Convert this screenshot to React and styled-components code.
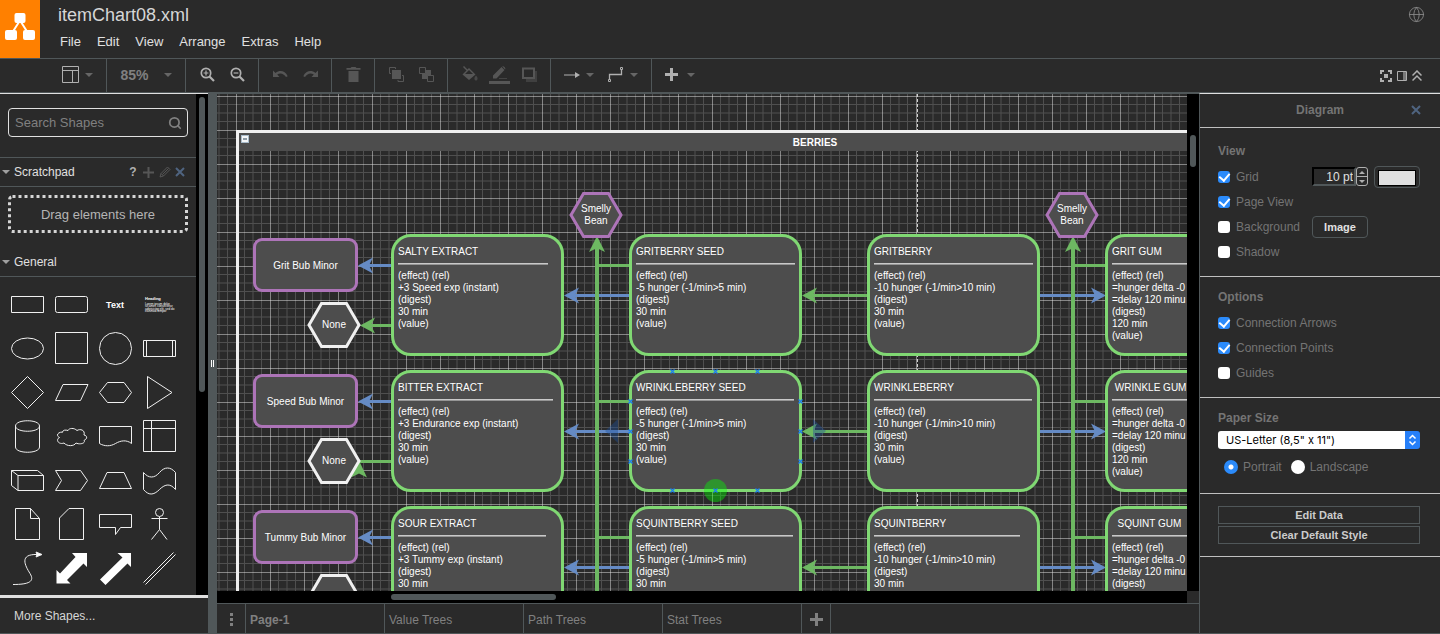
import React, { useState } from "react";
import styled, { createGlobalStyle, css } from "styled-components";
import { Globe, Search } from "lucide-react";

const bg = "#2a2a2a";
const slate = "#505759";
const light = "#e0e0e0";
const muted = "#747474";
const cardFill = "#4d4d4d";
const greenEdge = "#6db862";
const blueEdge = "#658bc5";
const green = "#80d873";
const purple = "#ad74b8";

const GlobalStyle = createGlobalStyle`
    * { box-sizing: border-box; }
    body {
        margin: 0;
        background: ${bg};
        color: #cccccc;
        font-family: "Liberation Sans", Arial, Helvetica, sans-serif;
        font-size: 12px;
    }
    button, input, select { font-family: inherit; margin: 0; }
    svg { display: block; flex: none; }
`;

const Shell = styled.div`
    display: flex;
    flex-direction: column;
    height: 100vh;
    border-bottom: 1px solid ${slate};
`;

/* header */
const Header = styled.header`
    display: flex;
    height: 58px;
    flex: none;
`;
const Logo = styled.a`
    display: flex;
    align-items: center;
    justify-content: center;
    width: 40px;
    padding-bottom: 4px;
    background: #ff8000;
`;
const Titles = styled.div`
    flex: 1;
    padding: 4px 0 0 18px;
`;
const FileName = styled.h1`
    margin: 0;
    color: #d6d6d6;
    font-size: 18px;
    font-weight: normal;
    line-height: 22px;
`;
const MenuBar = styled.nav`
    display: flex;
    gap: 16px;
    padding: 7px 0 0 2px;
`;
const MenuItem = styled.button`
    padding: 0;
    border: 0;
    background: none;
    color: #e0e0e0;
    font-size: 13px;
    line-height: 18px;
`;
const LanguageButton = styled.button`
    align-self: flex-start;
    margin: 6px 15px 0 0;
    padding: 0;
    border: 0;
    background: none;
    color: #8a8a8a;
`;

/* toolbar */
const Toolbar = styled.div`
    display: flex;
    flex: none;
    height: 35px;
    border-top: 1px solid ${slate};
    border-bottom: 1px solid ${slate};
`;
const Group = styled.div`
    display: flex;
    align-items: center;
    justify-content: ${p => p.$align || "center"};
    width: ${p => p.$width}px;
    padding: 0 6px 2px;
    border-right: ${p => (p.$last ? "0" : `1px solid ${slate}`)};
`;
const Tool = styled.button`
    display: flex;
    align-items: center;
    justify-content: ${p => (p.$menu ? "space-between" : "center")};
    min-width: ${p => (p.$menu ? 44 : 30)}px;
    height: 30px;
    gap: 6px;
    padding: ${p => (p.$menu ? "0 7px" : "0")};
    border: 0;
    background: none;
    color: ${p => (p.$off ? "#565656" : "#b0b0b0")};
`;
const Zoom = styled(Tool)`
    width: 65px;
    color: #808080;
    font-size: 14px;
    font-weight: bold;
`;
const Caret = styled.i`
    border: 4px solid transparent;
    border-top-color: ${p => p.$color || "#666666"};
    border-bottom: 0;
`;
const WindowTools = styled.div`
    display: flex;
    align-items: center;
    gap: 5px;
    margin-left: auto;
    padding-right: 18px;
`;
const SmallTool = styled.button`
    padding: 0;
    border: 0;
    background: none;
    color: #b0b0b0;
`;

/* body */
const Body = styled.div`
    display: flex;
    flex: 1;
    min-height: 0;
`;
const Sidebar = styled.aside`
    display: flex;
    flex-direction: column;
    width: 208px;
    flex: none;
    border-top: 1px solid ${light};
`;
const SidebarScroll = styled.div`
    display: flex;
    flex: 1;
    min-height: 0;
    overflow: hidden;
`;
const Palette = styled.div`
    width: 196px;
`;
const SearchBox = styled.label`
    display: flex;
    align-items: center;
    height: 29px;
    margin: 14px 8px 20px;
    padding: 0 5px 0 6px;
    border: 1px solid ${light};
    border-radius: 4px;
    color: #808080;
`;
const SearchInput = styled.input`
    flex: 1;
    min-width: 0;
    padding: 0;
    border: 0;
    outline: 0;
    background: none;
    color: #cccccc;
    font-size: 13px;
    &::placeholder { color: #808080; }
`;
const SectionTitle = styled.div`
    display: flex;
    align-items: center;
    height: 30px;
    padding: 0 9px 0 2px;
    gap: 4px;
    border-top: ${p => (p.$line ? `1px solid ${slate}` : "0")};
    border-bottom: 1px solid ${slate};
`;
const SectionName = styled.h2`
    flex: 1;
    margin: 0;
    color: #e0e0e0;
    font-size: 12px;
    font-weight: normal;
`;
const SectionTool = styled.button`
    width: 12px;
    padding: 0;
    border: 0;
    background: none;
    color: ${p => p.$color || "#565656"};
    font-size: 12px;
    font-weight: bold;
`;
const DropZone = styled.div`
    display: grid;
    place-items: center;
    height: 38px;
    margin: 8px 8px 14px;
    color: #b5b5b5;
    font-size: 13px;
    & > * { grid-area: 1 / 1; }
`;
const ShapeGrid = styled.div`
    display: grid;
    grid-template-columns: repeat(4, 44px);
    grid-auto-rows: 44px;
    padding: 5px;
`;
const ShapeButton = styled.button`
    padding: 0;
    border: 0;
    background: none;
`;
const Track = styled.div`
    width: ${p => (p.$horizontal ? "auto" : "12px")};
    height: ${p => (p.$horizontal ? "12px" : "auto")};
    padding: ${p => p.$pad};
    background: #000000;
`;
const Thumb = styled.div`
    width: ${p => p.$width}px;
    height: ${p => p.$height}px;
    border-radius: 3px;
    background: ${slate};
`;
const MoreShapes = styled.button`
    height: 38px;
    flex: none;
    padding: 0 14px;
    border: 0;
    border-top: 3px solid ${light};
    background: none;
    color: #d6d6d6;
    font-size: 12px;
    text-align: left;
`;
const Splitter = styled.div`
    display: flex;
    align-items: center;
    justify-content: center;
    gap: 1px;
    width: 9px;
    background: ${slate};
    i { width: 1px; height: 7px; background: #ffffff; }
`;

/* canvas */
const Center = styled.main`
    display: flex;
    flex-direction: column;
    flex: 1;
    min-width: 0;
    border-top: 1px solid ${slate};
`;
const CanvasArea = styled.div`
    display: grid;
    grid-template: 1fr 12px / 1fr 12px;
    flex: 1;
    min-height: 0;
`;
const Canvas = styled.div`
    position: relative;
    overflow: hidden;
    color: #ffffff;
    font-size: 10px;
    line-height: 12px;
`;
const Layer = styled.svg`
    position: absolute;
    inset: 0;
    width: 100%;
    height: 100%;
`;
const placed = css`
    position: absolute;
    left: ${p => p.$x}px;
    top: ${p => p.$y}px;
`;
const Container = styled.section`
    ${placed}
    width: 1150px;
    height: 2000px;
    border: 3px solid #f0f0f0;
`;
const ContainerTitle = styled.h2`
    display: flex;
    height: 18px;
    margin: 0;
    padding: 2px;
    background: ${cardFill};
    font-size: 10px;
    line-height: 15px;
    span { flex: 1; text-align: center; }
`;
const Fold = styled.button`
    width: 8px;
    height: 8px;
    padding: 0;
    border: 1px solid #a9bccb;
    background: linear-gradient(#8d9aa4 0 0) center / 4px 2px no-repeat #f4f6f8;
`;
const Card = styled.article`
    ${placed}
    width: 173px;
    height: 122px;
    padding: 9px 4px;
    border: 3px solid ${green};
    border-radius: 20px;
    background: ${cardFill};
    white-space: pre;
`;
const CardRule = styled.hr`
    width: ${p => p.$width}px;
    margin: 5px 0;
    border: 0;
    border-top: 1px solid #c9c9c9;
    border-bottom: 1px solid #959595;
`;
const Effect = styled.div`
    ${placed}
    display: grid;
    place-items: center;
    width: 105px;
    height: 54px;
    padding-top: 2px;
    border: 3px solid ${purple};
    border-radius: 9px;
    background: ${cardFill};
`;
const HexBox = styled.div`
    ${placed}
    display: grid;
    place-items: center;
    width: 54px;
    height: 46px;
    text-align: center;
    white-space: pre;
    & > * { grid-area: 1 / 1; }
    span { position: relative; }
`;

/* page tabs */
const Tabs = styled.div`
    display: flex;
    height: 30px;
    flex: none;
    border-top: 1px solid ${slate};
`;
const Tab = styled.button`
    display: flex;
    align-items: center;
    justify-content: ${p => (p.$icon ? "center" : "flex-start")};
    width: ${p => p.$width || 139}px;
    padding: 2px 4px 0;
    border: 0;
    border-right: 1px solid ${slate};
    background: none;
    color: #808080;
    font-size: 12px;
    font-weight: ${p => (p.$active ? "bold" : "normal")};
`;

/* format panel */
const Format = styled.aside`
    width: 241px;
    flex: none;
    border-top: 1px solid ${light};
    border-left: 1px solid ${slate};
    color: ${muted};
`;
const FormatTitle = styled.div`
    display: flex;
    align-items: center;
    height: 34px;
    padding: 0 17px 2px 0;
    border-bottom: 1px solid #c0c0c0;
    font-weight: bold;
    span { flex: 1; padding-left: 29px; text-align: center; }
`;
const Section = styled.section`
    padding: ${p => p.$top || 11}px 20px 12px 18px;
    border-bottom: 1px solid #c0c0c0;
`;
const Heading = styled.h3`
    display: block;
    margin: 0 0 4px;
    font-size: 12px;
    font-weight: bold;
    line-height: 18px;
`;
const Row = styled.div`
    display: flex;
    align-items: center;
    justify-content: space-between;
    height: 25px;
`;
const Check = styled.label`
    display: flex;
    align-items: center;
    flex: 1;
    gap: 6px;
`;
const Box = styled.input`
    appearance: none;
    display: grid;
    place-items: center;
    width: 12px;
    height: 12px;
    border-radius: 3px;
    background: #ffffff;
    &:checked { background: #2b8bfb; }
    &:checked::before {
        content: "";
        width: 5px;
        height: 8px;
        margin-bottom: 2px;
        border: solid #ffffff;
        border-width: 0 2px 2px 0;
        transform: rotate(40deg);
    }
`;
const Radio = styled.input`
    appearance: none;
    width: 14px;
    height: 14px;
    border-radius: 50%;
    background: #ffffff;
    &:checked { background: radial-gradient(circle, #ffffff 2px, #2b8bfb 3px); }
`;
const RadioRow = styled.div`
    display: flex;
    gap: 9px;
    height: 27px;
    margin-top: 5px;
    padding: 0 0 2px 6px;
    label { display: flex; align-items: center; gap: 5px; }
`;
const GridSize = styled.div`
    display: flex;
    width: 56px;
    height: 19px;
    margin-right: 6px;
`;
const SizeInput = styled.input`
    width: 44px;
    padding: 0 1px 0 0;
    border: 2px solid;
    border-color: #000000 ${slate} ${slate} #000000;
    background: ${bg};
    color: #e0e0e0;
    font-size: 12px;
    text-align: right;
`;
const Stepper = styled.div`
    display: grid;
    width: 12px;
    border: 1px solid #b0b0b0;
    border-radius: 3px;
`;
const Step = styled.button`
    display: grid;
    place-items: center;
    padding: 0;
    border: 0;
    border-bottom: ${p => (p.$up ? "1px solid #b0b0b0" : "0")};
    background: none;
    &::before {
        content: "";
        border: 3px solid transparent;
        ${p => (p.$up ? "border-bottom-color: #b0b0b0; border-top: 0;" : "border-top-color: #b0b0b0; border-bottom: 0;")}
    }
`;
const ColorButton = styled.button`
    display: flex;
    width: 46px;
    height: 22px;
    padding: 3px;
    border: 1px solid ${slate};
    border-radius: 4px;
    background: none;
    &::before {
        content: "";
        flex: 1;
        height: 14px;
        border: 1px solid #000000;
        background: #e0e0e0;
    }
`;
const ImageButton = styled.button`
    width: 56px;
    height: 22px;
    margin-right: 52px;
    padding: 0;
    border: 1px solid ${slate};
    border-radius: 4px;
    background: none;
    color: #e0e0e0;
    font-size: 11px;
    font-weight: bold;
`;
const WideButton = styled.button`
    display: block;
    width: 100%;
    height: 18px;
    padding: 0;
    border: 1px solid ${slate};
    background: none;
    color: #cccccc;
    font-size: 11px;
    font-weight: bold;
    line-height: 16px;
    & + & { margin-top: 2px; }
`;
const PaperSelect = styled.select`
    appearance: none;
    display: block;
    width: 100%;
    height: 18px;
    padding: 0 20px 0 8px;
    border: 0;
    border-radius: 3px;
    background: url("data:image/svg+xml,%3Csvg xmlns='http://www.w3.org/2000/svg' width='15' height='18'%3E%3Crect width='15' height='18' fill='%23267ff8'/%3E%3Cpath d='M4.500 7.500l3-3 3 3M4.500 10.500l3 3 3-3' fill='none' stroke='white' stroke-width='1.500'/%3E%3C/svg%3E") right / 15px 18px no-repeat #ffffff;
    color: #000000;
    font-family: Inter, sans-serif;
    font-size: 11px;
`;

const icons = {
    layout: <g fill="none" stroke="currentColor"><path d="M.5.5h16v16H.5zM.5 4.500h16M10.500 4.500v12" /></g>,
    zoomIn: <g fill="none" stroke="currentColor" strokeWidth="1.700"><circle cx="7" cy="7" r="4.700" /><path d="M10.500 10.500l4.500 4.500" strokeWidth="2.200" /><path d="M7 4.600v4.800M4.600 7h4.800" strokeWidth="1.200" /></g>,
    zoomOut: <g fill="none" stroke="currentColor" strokeWidth="1.700"><circle cx="7" cy="7" r="4.700" /><path d="M10.500 10.500l4.500 4.500" strokeWidth="2.200" /><path d="M4.600 7h4.800" strokeWidth="1.200" /></g>,
    undo: <path d="M1 4.500v6.500h6.500L5.200 8.600C8 6.500 11.500 7 14 11l1.700-.8C13 4.500 7.500 3.800 3.600 7z" fill="currentColor" />,
    redo: <path d="M16 4.500v6.500H9.500l2.300-2.400C9 6.500 5.500 7 3 11l-1.700-.8C4 4.500 9.500 3.800 13.400 7z" fill="currentColor" />,
    trash: <path d="M1.500 2h4l1-1h4l1 1h4v1.700h-14zM3.500 5h10v11h-10z" fill="currentColor" />,
    front: <g fill="none" stroke="currentColor"><path d="M4 4h9v9H4z" fill="currentColor" stroke="none" /><path d="M3 7.500H1.500v-6h6V3M10 14v1.500h5.500v-6H14" /></g>,
    back: <g fill="none" stroke="currentColor"><path d="M4 4h9v9H4z" fill="currentColor" stroke="none" /><path d="M1.500 1.500h6v6h-6zM9.500 9.500h6v6h-6z" fill={bg} /></g>,
    fill: <g fill="currentColor"><path d="M2 1l1-1 3.500 3.500L8 2l6.500 6.500L8 14 1.500 8.500 5.500 4.500zM6.500 5.500L4 8h8L8 4z" fillRule="evenodd" /><path d="M15 9.500c3 3.500 1 5 0 5s-3-1.500 0-5z" opacity=".7" /></g>,
    pen: <g fill="currentColor"><path d="M0 15h21v3H0zM4 12.500V9.500L12.500 1l3 3L7.500 12.500zM13.300.4c1-1 4 1.800 2.800 3z" /><path d="M10 12h8v1h-8z" opacity=".6" /></g>,
    shadow: <g><path d="M5 5h11v11H5z" fill="currentColor" opacity=".5" /><path d="M2 2.500h11v9.500H2z" fill={bg} stroke="currentColor" strokeWidth="2" /></g>,
    arrow: <path d="M0 7.500h11V5l5 3-5 3V8.500H0z" fill="currentColor" />,
    waypoint: <g fill="none" stroke="currentColor"><path d="M.5 12.500h2v2h-2zM12.500.5h2v2h-2z" /><path d="M1.500 12V7.500h12V3" strokeWidth="1.300" /></g>,
    plus: <path d="M5 0h3v5h5v3H8v5H5V8H0V5h5z" fill="currentColor" />,
    full: <g fill="none" stroke="currentColor" strokeWidth="2"><path d="M1 4V1h3M8 1h3v3M11 8v3H8M4 11H1V8" /><path d="M4 4h4v4H4z" fill="currentColor" stroke="none" /></g>,
    panel: <g><path d="M.5.500h9v9h-9z" fill="none" stroke="currentColor" /><path d="M6 1h3v8H6z" fill="currentColor" opacity=".6" /></g>,
    chevrons: <path d="M.5 5.500L5 1l4.500 4.500M.5 10.500L5 6l4.500 4.500" fill="none" stroke="currentColor" strokeWidth="1.500" />,
    pencil: <path d="M1 11l1-3.500L8.500 1 11 3.500 4.500 10zM2 7.500L4.500 10M3.500 8.500l6-6" fill="none" stroke="currentColor" />,
    close: <path d="M1 1l8 8M9 1L1 9" stroke="currentColor" strokeWidth="2" />,
    dots: <path d="M0 0h3v3H0zM0 5h3v3H0zM0 10h3v3H0z" fill="currentColor" />
};

const Icon = ({ name, w = 17, h = 17 }) => (
    <svg width={w} height={h} aria-hidden="true">{icons[name]}</svg>
);

// palette drawings, each on a 44 x 44 cell
const shapes = [
    ["Rectangle", <path d="M6.500 14.500h32v16h-32z" />],
    ["Rounded rectangle", <rect x="6.500" y="14.500" width="32" height="16" rx="2" />],
    ["Text", <text x="22" y="26" textAnchor="middle" fill="#fff" stroke="none" fontSize="9" fontWeight="bold">Text</text>],
    ["Textbox", <g fill="#fff" stroke="none" fontSize="3">
        <text x="8" y="18" fontSize="4" fontWeight="bold">Heading</text>
        <text x="8" y="23">Lorem ipsum dolor</text>
        <text x="8" y="25">sit amet, consectetur</text>
        <text x="8" y="28">adipisicing elit, sed do</text>
        <text x="8" y="30">eiusmod tempor</text>
    </g>],
    ["Ellipse", <ellipse cx="22.500" cy="22.500" rx="16" ry="10.500" />],
    ["Square", <path d="M6.500 6.500h32v31h-32z" />],
    ["Circle", <circle cx="22.500" cy="22.500" r="16" />],
    ["Process", <path d="M6.500 14.500h32v16h-32zM9.500 14.500v16M35.500 14.500v16" />],
    ["Diamond", <path d="M22.500 6.500l16 16-16 16-16-16z" />],
    ["Parallelogram", <path d="M14 14.500h25L31.500 30.500h-25z" />],
    ["Hexagon", <path d="M14.500 12.500h16.500l7.500 10-7.500 10H14.500l-8-10z" />],
    ["Triangle", <path d="M10.500 6.500v32L35 22.500z" />],
    ["Cylinder", <path d="M10.500 12v21c0 7 24 7 24 0V12c0-7-24-7-24 0c0 7 24 7 24 0" />],
    ["Cloud", <path d="M14 18c-6 0-7 4-3.500 5.500C6 26 10 31 15 29c3 3.500 10 3.500 12 0 4 2 10 0 8-2.500 4-2 3-5 0-5.500 1.500-5-4-6.500-7-4.500-3-3-8-2.500-9 0-3-1-6 0-5 1.500z" />],
    ["Document", <path d="M6.500 12.500h32v17c-5-4-11-3-16 0-5 3-11 3-16 0z" />],
    ["Internal storage", <path d="M6.500 6.500h32v31h-32zM6.500 14.500h32M14.500 6.500v31" />],
    ["Cube", <path d="M6.500 12.500h26l6 5v15H13l-6.500-5zM6.500 12.500l6.500 5h25.500M13 17.500v15" />],
    ["Step", <path d="M6.500 12.500h25L38.500 22.500l-7 10h-25l6-10z" />],
    ["Trapezoid", <path d="M6.500 30.500l7.500-16h17l7.500 16z" />],
    ["Tape", <path d="M6.500 14.500c5 6 11 6 16 0s11-6 16 0v17c-5-6-10-6-16 0s-11 6-16 0z" />],
    ["Note", <path d="M10.500 6.500h15l9 10v21h-24zM25.500 6.500V16.500h9" />],
    ["Card", <path d="M20 6.500h14.500v31h-24V16z" />],
    ["Callout", <path d="M6.500 12.500h32v13H27.500l-5 7v-7H6.500z" />],
    ["Actor", <path d="M22.500 14.500v13M14.500 16.500h16M22.500 27.500l-8 10M22.500 27.500l7.500 10M26.500 10.500a4 4 0 1 1-8 0a4 4 0 1 1 8 0" />],
    ["Curve", <g><path d="M8 38.500c16 0 22-3 17-11S14 8 32 8.500" /><path d="M31 6l6 2.500-6 2.500 1-2.500z" fill="#fff" /></g>],
    ["Bidirectional arrow", <path d="M38 7v14L34.500 17.500 18 34l3.500 3.500H7.500V24l3.500 3.500L26.500 11l-3.500-4z" fill="#fff" stroke="none" />],
    ["Arrow", <path d="M38 7v14L34.500 17.500 12.500 39 7 33.500 29.500 11.500 24.500 7z" fill="#fff" stroke="none" />],
    ["Link", <path d="M6.500 36.500l30-30M8.500 38.500l30-30" />]
];

// positions are in canvas coordinates
const columns = [174, 412, 650, 888];
const gumText = "=hunger delta -0\n=delay 120 minu";
const rows = [
    {
        y: 140,
        effect: "Grit Bub Minor",
        cards: [
            ["SALTY EXTRACT", 150, "+3 Speed exp (instant)"],
            ["GRITBERRY SEED", 159, "-5 hunger (-1/min>5 min)"],
            ["GRITBERRY", 159, "-10 hunger (-1/min>10 min)"],
            ["GRIT GUM", 159, gumText]
        ]
    },
    {
        y: 276,
        effect: "Speed Bub Minor",
        cards: [
            ["BITTER EXTRACT", 155, "+3 Endurance exp (instant)"],
            ["WRINKLEBERRY SEED", 158, "-5 hunger (-1/min>5 min)"],
            ["WRINKLEBERRY", 158, "-10 hunger (-1/min>10 min)"],
            [" WRINKLE GUM", 159, gumText]
        ]
    },
    {
        y: 412,
        effect: "Tummy Bub Minor",
        cards: [
            ["SOUR EXTRACT", 148, "+3 Tummy exp (instant)"],
            ["SQUINTBERRY SEED", 157, "-5 hunger (-1/min>5 min)"],
            ["SQUINTBERRY", 146, "-10 hunger (-1/min>10 min)"],
            ["  SQUINT GUM", 159, gumText]
        ]
    }
];

const Arrow = ({ from, to, y, color }) => {
    const d = to < from ? 1 : -1;
    return (
        <g>
            <path d={`M${from} ${y}H${to + d * 10}`} stroke={color} strokeWidth="3" />
            <path d={`M${to} ${y}l${d * 15} -8l${d * -4} 8l${d * 4} 8z`} fill={color} />
        </g>
    );
};

const Trunk = ({ x }) => (
    <g>
        <path d={`M${x} 152V600`} stroke={greenEdge} strokeWidth="4" />
        <path d={`M${x} 142l8 16l-8 -4l-8 4z`} fill={greenEdge} />
        {rows.map(r => (
            <path key={r.y} d={`M${x} ${r.y + 31.5}H${x + 34}`} stroke={greenEdge} strokeWidth="3" />
        ))}
    </g>
);

// the second "None" edge enters its hexagon from below
const BentArrow = ({ y }) => (
    <g>
        <path d={`M175 ${y}H142`} stroke={greenEdge} strokeWidth="3" />
        <path d={`M142 ${y - 1}l8 17l-8 -4l-8 4z`} fill={greenEdge} />
    </g>
);

const Edges = () => (
    <Layer fill="none">
        {rows.map((r, i) => (
            <g key={r.y}>
                <Arrow from={175} to={141} y={r.y + 31.5} color={blueEdge} />
                {i === 0
                    ? <Arrow from={175} to={143} y={r.y + 91.5} color={greenEdge} />
                    : <BentArrow y={r.y + 91.5} />}
                <Arrow from={413} to={347} y={r.y + 61.5} color={blueEdge} />
                <Arrow from={651} to={585} y={r.y + 61.5} color={greenEdge} />
                <Arrow from={822} to={889} y={r.y + 61.5} color={blueEdge} />
            </g>
        ))}
        <Trunk x={380} />
        <Trunk x={856} />
    </Layer>
);

const Hex = ({ x, y, color, children }) => (
    <HexBox $x={x} $y={y}>
        <svg width="54" height="46">
            <path d="M2 23L14.500 1.500h25L52 23L39.500 44.500h-25z" fill={cardFill} stroke={color} strokeWidth="3" />
        </svg>
        <span>{children}</span>
    </HexBox>
);

const points = [
    [455, 277], [498, 277], [540, 277],
    [455, 396], [498, 396], [540, 396],
    [413, 307], [413, 337], [413, 367],
    [583, 307], [583, 337], [583, 367]
];

const Hover = () => (
    <Layer fill="none">
        <path d="M401 325v24l-13-12z" fill="#1e4f9a" opacity=".4" />
        <path d="M596 325v24l13-12z" fill="#1e4f9a" opacity=".4" />
        <circle cx="498.500" cy="396.500" r="11.500" fill="#00ff00" opacity=".4" />
        {points.map(([x, y]) => (
            <path key={x + "-" + y} d={`M${x - 1.5} ${y - 1.5}l4 4m0 -4l-4 4`} stroke="#1a7cf0" strokeWidth="1.200" />
        ))}
    </Layer>
);

const Diagram = () => (
    <Canvas>
        <Layer>
            <defs>
                <pattern id="grid" x="19" y="2" width="34" height="34" patternUnits="userSpaceOnUse">
                    <path d="M0 8.500H34M8.500 0V34M0 17H34M17 0V34M0 25.500H34M25.500 0V34" stroke={light} opacity=".2" />
                    <path d="M34 0H0V34" fill="none" stroke={light} />
                </pattern>
            </defs>
            <rect width="100%" height="100%" fill="url(#grid)" />
            <path d="M700.500 0V600" stroke="#d0d0d0" strokeDasharray="3 2" />
        </Layer>
        <Container $x={19} $y={36}>
            <ContainerTitle>
                <Fold aria-label="Collapse" />
                <span>BERRIES</span>
            </ContainerTitle>
        </Container>
        <Edges />
        {rows.map(r => (
            <React.Fragment key={r.y}>
                <Effect $x={36} $y={r.y + 4}>{r.effect}</Effect>
                <Hex x={90} y={r.y + 68} color="#f0f0f0">None</Hex>
                {r.cards.map(([title, width, text], i) => (
                    <Card key={title} $x={columns[i]} $y={r.y}>
                        {title}
                        <CardRule $width={width} />
                        {"(effect) (rel)\n" + text + "\n(digest)\n" + (i === 3 ? "120 min" : "30 min") + "\n(value)"}
                    </Card>
                ))}
            </React.Fragment>
        ))}
        <Hex x={352} y={98} color={purple}>{"Smelly\nBean"}</Hex>
        <Hex x={828} y={98} color={purple}>{"Smelly\nBean"}</Hex>
        <Hover />
    </Canvas>
);

const CheckRow = ({ label, on, children }) => {
    const [checked, setChecked] = useState(!!on);
    return (
        <Row>
            <Check>
                <Box type="checkbox" checked={checked} onChange={e => setChecked(e.target.checked)} />
                {label}
            </Check>
            {children}
        </Row>
    );
};

const FormatPanel = () => {
    const [size, setSize] = useState(10);
    return (
        <Format>
            <FormatTitle>
                <span>Diagram</span>
                <SectionTool $color="#4f6480" aria-label="Close"><Icon name="close" w={10} h={10} /></SectionTool>
            </FormatTitle>
            <Section $top={14}>
                <Heading>View</Heading>
                <CheckRow label="Grid" on>
                    <GridSize>
                        <SizeInput aria-label="Grid size" value={size + " pt"} readOnly />
                        <Stepper>
                            <Step $up aria-label="Increase" onClick={() => setSize(size + 1)} />
                            <Step aria-label="Decrease" onClick={() => setSize(size - 1)} />
                        </Stepper>
                    </GridSize>
                    <ColorButton aria-label="Grid color" />
                </CheckRow>
                <CheckRow label="Page View" on />
                <CheckRow label="Background">
                    <ImageButton>Image</ImageButton>
                </CheckRow>
                <CheckRow label="Shadow" />
            </Section>
            <Section>
                <Heading>Options</Heading>
                <CheckRow label="Connection Arrows" on />
                <CheckRow label="Connection Points" on />
                <CheckRow label="Guides" />
            </Section>
            <Section>
                <Heading as="label" htmlFor="paper">Paper Size</Heading>
                <PaperSelect id="paper">
                    <option>US-Letter (8,5" x 11")</option>
                    <option>A4 (210 mm x 297 mm)</option>
                </PaperSelect>
                <RadioRow>
                    <label><Radio type="radio" name="orientation" defaultChecked />Portrait</label>
                    <label><Radio type="radio" name="orientation" />Landscape</label>
                </RadioRow>
            </Section>
            <Section $top={12}>
                <WideButton>Edit Data</WideButton>
                <WideButton>Clear Default Style</WideButton>
            </Section>
        </Format>
    );
};

const App = () => (
    <Shell>
        <GlobalStyle />
        <Header>
            <Logo href="#" aria-label="Home">
                <svg width="30" height="28" fill="#fff">
                    <path d="M14 9L7 20M16 9l7 11" stroke="#fff" strokeWidth="2" />
                    <rect x="9.500" y="0" width="11" height="10" rx="2" />
                    <rect x="0" y="17" width="12" height="10" rx="2" />
                    <rect x="18" y="17" width="12" height="10" rx="2" />
                </svg>
            </Logo>
            <Titles>
                <FileName>itemChart08.xml</FileName>
                <MenuBar>
                    {["File", "Edit", "View", "Arrange", "Extras", "Help"].map(m => <MenuItem key={m}>{m}</MenuItem>)}
                </MenuBar>
            </Titles>
            <LanguageButton aria-label="Language"><Globe size={17} strokeWidth={1.2} /></LanguageButton>
        </Header>

        <Toolbar>
            <Group $width={107} $align="flex-end">
                <Tool $menu aria-label="Layout"><Icon name="layout" /><Caret /></Tool>
            </Group>
            <Group $width={79}>
                <Zoom $menu>85%<Caret /></Zoom>
            </Group>
            <Group $width={73}>
                <Tool aria-label="Zoom in"><Icon name="zoomIn" /></Tool>
                <Tool aria-label="Zoom out"><Icon name="zoomOut" /></Tool>
            </Group>
            <Group $width={73}>
                <Tool $off aria-label="Undo"><Icon name="undo" /></Tool>
                <Tool $off aria-label="Redo"><Icon name="redo" /></Tool>
            </Group>
            <Group $width={43}>
                <Tool $off aria-label="Delete"><Icon name="trash" /></Tool>
            </Group>
            <Group $width={73}>
                <Tool $off aria-label="To front"><Icon name="front" /></Tool>
                <Tool $off aria-label="To back"><Icon name="back" /></Tool>
            </Group>
            <Group $width={103}>
                <Tool $off aria-label="Fill color"><Icon name="fill" /></Tool>
                <Tool $off aria-label="Line color"><Icon name="pen" w={21} h={18} /></Tool>
                <Tool $off aria-label="Shadow"><Icon name="shadow" /></Tool>
            </Group>
            <Group $width={101}>
                <Tool $menu aria-label="Connection"><Icon name="arrow" w={16} h={16} /><Caret /></Tool>
                <Tool $menu aria-label="Waypoints"><Icon name="waypoint" w={16} h={16} /><Caret /></Tool>
            </Group>
            <Group $width={60} $align="flex-start" $last>
                <Tool $menu aria-label="Insert"><Icon name="plus" w={14} h={14} /><Caret /></Tool>
            </Group>
            <WindowTools>
                <SmallTool aria-label="Fullscreen"><Icon name="full" w={12} h={12} /></SmallTool>
                <SmallTool aria-label="Format panel"><Icon name="panel" w={10} h={10} /></SmallTool>
                <SmallTool aria-label="Collapse"><Icon name="chevrons" w={10} h={12} /></SmallTool>
            </WindowTools>
        </Toolbar>

        <Body>
            <Sidebar>
                <SidebarScroll>
                    <Palette>
                        <SearchBox>
                            <SearchInput placeholder="Search Shapes" aria-label="Search Shapes" />
                            <Search size={14} strokeWidth={3} />
                        </SearchBox>
                        <SectionTitle $line>
                            <Caret $color="#a0a0a0" />
                            <SectionName>Scratchpad</SectionName>
                            <SectionTool $color="#b0b0b0">?</SectionTool>
                            <SectionTool aria-label="Add"><svg width="11" height="11"><path d="M0 5.500h11M5.500 0v11" stroke="currentColor" strokeWidth="2" /></svg></SectionTool>
                            <SectionTool aria-label="Edit"><Icon name="pencil" w={12} h={12} /></SectionTool>
                            <SectionTool $color="#4f6480" aria-label="Close"><Icon name="close" w={10} h={10} /></SectionTool>
                        </SectionTitle>
                        <DropZone>
                            <svg width="100%" height="38">
                                <rect x="1.500" y="1.500" width="177" height="35" rx="3" fill="none" stroke="#d6d6d6" strokeWidth="3" strokeDasharray="3 3" />
                            </svg>
                            <span>Drag elements here</span>
                        </DropZone>
                        <SectionTitle>
                            <Caret $color="#a0a0a0" />
                            <SectionName>General</SectionName>
                        </SectionTitle>
                        <ShapeGrid>
                            {shapes.map(([name, drawing]) => (
                                <ShapeButton key={name} aria-label={name}>
                                    <svg width="44" height="44" fill="none" stroke="#f0f0f0">{drawing}</svg>
                                </ShapeButton>
                            ))}
                        </ShapeGrid>
                    </Palette>
                    <Track $pad="3px"><Thumb $width={6} $height={295} /></Track>
                </SidebarScroll>
                <MoreShapes>More Shapes...</MoreShapes>
            </Sidebar>
            <Splitter><i /><i /></Splitter>
            <Center>
                <CanvasArea>
                    <Diagram />
                    <Track $pad="41px 3px 0"><Thumb $width={6} $height={32} /></Track>
                    <Track $horizontal $pad="3px 0 0 174px"><Thumb $width={165} $height={6} /></Track>
                </CanvasArea>
                <Tabs>
                    <Tab $icon $width={29} aria-label="Pages"><Icon name="dots" w={3} h={13} /></Tab>
                    <Tab $active>Page-1</Tab>
                    <Tab>Value Trees</Tab>
                    <Tab>Path Trees</Tab>
                    <Tab>Stat Trees</Tab>
                    <Tab $icon $width={29} aria-label="Add page"><Icon name="plus" w={13} h={13} /></Tab>
                </Tabs>
            </Center>
            <FormatPanel />
        </Body>
    </Shell>
);

export default App;
